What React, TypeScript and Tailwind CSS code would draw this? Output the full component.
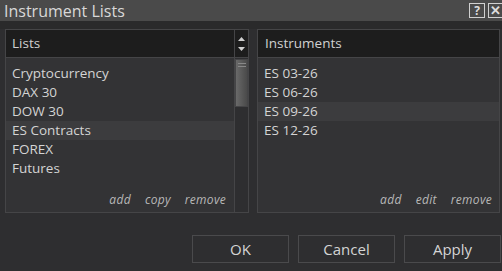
import React from "react";

const font = { fontFamily: '"Open Sans", "Noto Sans", sans-serif' };

function Row({ label, selected }: { label: string; selected?: boolean }) {
  return (
    <div
      className={`h-[19px] flex items-center pl-[6px] text-[13.5px] leading-none text-[#d4d4d4] ${
        selected ? "bg-[#3c3c3e]" : ""
      }`}
    >
      {label}
    </div>
  );
}

function Actions({ items, right }: { items: string[]; right: string }) {
  return (
    <div className={`absolute bottom-[6px] ${right} flex gap-[14px] text-[12px] italic text-[#b8b8b8] leading-none tracking-[0.3px]`}>
      {items.map((i) => (
        <span key={i}>{i}</span>
      ))}
    </div>
  );
}

export default function App() {
  return (
    <div className="w-[502px] h-[271px] bg-[#2e2e30] flex flex-col overflow-hidden" style={font}>
      {/* title bar */}
      <div className="h-[21px] bg-[#4a4a4a] flex items-center justify-between pl-[4px] shrink-0">
        <span className="text-[16px] text-[#d8d8d8] leading-none">Instrument Lists</span>
        <div className="flex gap-[3px] items-center">
          <div className="w-[16px] h-[15px] border border-[#d0d0d0] flex items-center justify-center text-[12px] font-bold text-[#dcdcdc] leading-none">?</div>
          <div className="w-[14px] h-[15px] border border-[#d0d0d0] border-r-0 flex items-center justify-center text-[13px] font-bold text-[#dcdcdc] leading-none">✕</div>
        </div>
      </div>
      <div className="h-[8px] bg-[#2a2a2b] shrink-0" />
      {/* panels */}
      <div className="flex pl-[5px] pr-[2px] gap-[8px] h-[184px] shrink-0">
        {/* left */}
        <div className="w-[244px] border border-[#454547] bg-[#333335] flex flex-col relative">
          <div className="flex h-[28px] border-b border-[#454547]">
            <div className="flex-1 bg-[#1d1d1d] flex items-center pl-[6px] text-[13.5px] text-[#d0d0d0] border-r border-[#454547]">Lists</div>
            <div className="w-[13px] bg-[#1d1d1d] flex flex-col items-center justify-center gap-[6px]">
              <svg width="7" height="4" viewBox="0 0 7 4"><path d="M0 4 L3.5 0 L7 4 Z" fill="#d0d0d0" /></svg>
              <svg width="7" height="4" viewBox="0 0 7 4"><path d="M0 0 L3.5 4 L7 0 Z" fill="#d0d0d0" /></svg>
            </div>
          </div>
          <div className="flex flex-1">
            <div className="flex-1 pt-[6px] flex flex-col">
              <Row label="Cryptocurrency" />
              <Row label="DAX 30" />
              <Row label="DOW 30" />
              <Row label="ES Contracts" selected />
              <Row label="FOREX" />
              <Row label="Futures" />
            </div>
            <div className="w-[14px] bg-[#2e2e30] border-l border-[#454547] relative">
              <div className="absolute left-0 top-[1px] w-[13px] h-[48px] border border-[#454547] bg-gradient-to-r from-[#6a6a6a] to-[#4a4a4a] flex flex-col items-center gap-[2px] pt-[3px]">
                <div className="w-[8px] h-px bg-[#888]" />
                <div className="w-[8px] h-px bg-[#888]" />
              </div>
            </div>
          </div>
          <Actions items={["add", "copy", "remove"]} right="right-[22px]" />
        </div>
        {/* right */}
        <div className="flex-1 border border-[#454547] bg-[#333335] flex flex-col relative">
          <div className="h-[28px] bg-[#1d1d1d] border-b border-[#454547] flex items-center pl-[7px] text-[13.5px] text-[#d0d0d0]">Instruments</div>
          <div className="pt-[6px] flex flex-col">
            <Row label="ES 03-26" />
            <Row label="ES 06-26" />
            <Row label="ES 09-26" selected />
            <Row label="ES 12-26" />
          </div>
          <Actions items={["add", "edit", "remove"]} right="right-[7px]" />
        </div>
      </div>
      {/* buttons */}
      <div className="flex gap-[9px] pt-[22px] pl-[192px]">
        {["OK", "Cancel", "Apply"].map((b) => (
          <div key={b} className="w-[97px] h-[28px] shrink-0 border border-[#4a4a4c] flex items-center justify-center text-[15px] text-[#d4d4d4]">
            {b}
          </div>
        ))}
      </div>
    </div>
  );
}
